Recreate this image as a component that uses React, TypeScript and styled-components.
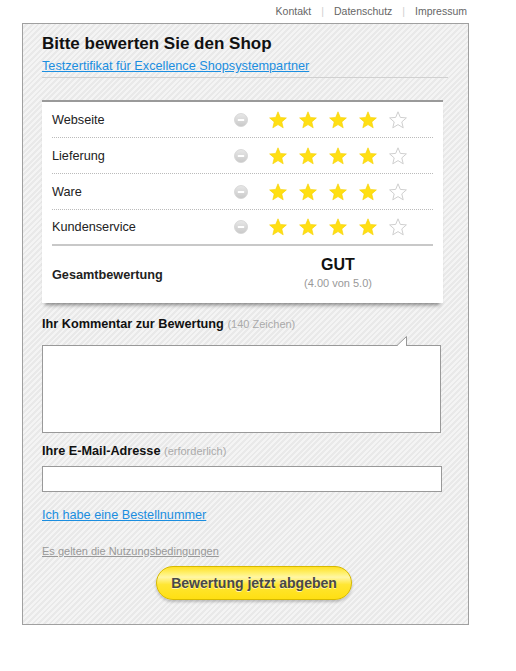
import React, { FC } from 'react'
import styled, { createGlobalStyle } from 'styled-components'

const GlobalStyle = createGlobalStyle`
  html, body {
    margin: 0;
    padding: 0;
    background: #fff;
  }
  body {
    font-family: 'Liberation Sans', Arial, sans-serif;
    color: #222;
  }
`

const Page = styled.div`
  width: 516px;
  height: 671px;
`

const TopNav = styled.nav`
  height: 23px;
  display: flex;
  align-items: center;
  justify-content: flex-end;
  padding-right: 49px;
  font-size: 10.5px;
  line-height: 13px;
`

const NavLink = styled.a`
  color: #666;
  text-decoration: none;
`

const NavSep = styled.span`
  color: #d0d0d0;
  margin: 0 10px;
`

const Panel = styled.div`
  margin-left: 22px;
  width: 447px;
  height: 602px;
  box-sizing: border-box;
  border: 1px solid #a0a0a0;
  padding: 10px 20px 0 19px;
  background-color: #efefef;
  background-image: repeating-linear-gradient(
    135deg,
    #f4f4f4 0px,
    #f4f4f4 2px,
    #e9e9e9 2px,
    #e9e9e9 4px
  );
`

const Header = styled.div`
  border-bottom: 1px solid #d0d0d0;
  padding-bottom: 3px;
`

const Title = styled.h1`
  margin: 0 0 4px;
  font-size: 17px;
  line-height: 20px;
  font-weight: 700;
  color: #111;
`

const BlueLink = styled.a`
  display: block;
  font-size: 12.7px;
  line-height: 16px;
  color: #1b8ee0;
  text-decoration: underline;
`

const Card = styled.div`
  margin-top: 22px;
  width: 401px;
  box-sizing: border-box;
  background: #fff;
  border-top: 2px solid #9a9a9a;
  padding: 0 10px;
  box-shadow: 0 5px 4px -3px rgba(0, 0, 0, 0.45);
`

const Row = styled.div<{ $last?: boolean }>`
  height: ${p => (p.$last ? 34 : 35)}px;
  display: flex;
  align-items: center;
  border-bottom: ${p => (p.$last ? '2px solid #c8c8c8' : '1px dotted #bbb')};
`

const Label = styled.div<{ $bold?: boolean }>`
  flex: 1;
  font-size: 12.7px;
  font-weight: ${p => (p.$bold ? 700 : 400)};
  color: #222;
`

const MinusIcon = styled.svg`
  width: 14px;
  height: 14px;
  margin-right: 15px;
  display: block;
`

const Stars = styled.div`
  display: flex;
  margin-right: 20px;
`

const StarCell = styled.span`
  width: 30px;
  height: 20px;
  display: flex;
  align-items: center;
  justify-content: center;
`

const TotalRow = styled.div`
  height: 57px;
  display: flex;
  align-items: center;
`

const TotalBox = styled.div`
  width: 150px;
  margin-right: 20px;
  text-align: center;
  padding-bottom: 5px;
`

const Grade = styled.div`
  font-size: 16px;
  line-height: 19px;
  font-weight: 700;
  color: #111;
`

const GradeSub = styled.div`
  margin-top: 2px;
  font-size: 11px;
  line-height: 14px;
  color: #999;
`

const FieldLabel = styled.div<{ $top: number }>`
  margin-top: ${p => p.$top}px;
  font-size: 12.7px;
  line-height: 16px;
  font-weight: 700;
  color: #111;
`

const Hint = styled.span`
  font-size: 11px;
  font-weight: 400;
  color: #aaa;
`

const CommentWrap = styled.div`
  position: relative;
  margin-top: 13px;
  width: 399px;
`

const CommentBox = styled.textarea`
  display: block;
  width: 399px;
  height: 88px;
  box-sizing: border-box;
  border: 1px solid #999;
  background: #fff;
  resize: none;
  outline: none;
  padding: 4px;
  font-family: inherit;
`

const Notch = styled.svg`
  position: absolute;
  top: -9px;
  right: 34px;
  width: 10px;
  height: 10px;
  display: block;
`

const EmailInput = styled.input`
  display: block;
  margin-top: 7px;
  width: 400px;
  height: 26px;
  box-sizing: border-box;
  border: 1px solid #999;
  background: #fff;
  outline: none;
`

const OrderLink = styled(BlueLink)`
  margin-top: 15px;
`

const Terms = styled.a`
  display: block;
  margin-top: 21px;
  font-size: 11px;
  line-height: 14px;
  color: #999;
  text-decoration: underline;
`

const SubmitButton = styled.button`
  display: block;
  margin: 8px 0 0 114px;
  width: 196px;
  height: 34px;
  border-radius: 17px;
  border: 1px solid #d6b900;
  background: linear-gradient(
    to bottom,
    #ffe125 0%,
    #fff27a 22%,
    #fff6a6 32%,
    #ffe633 55%,
    #ffdf12 100%
  );
  box-shadow: 0 2px 3px rgba(0, 0, 0, 0.22);
  font-family: 'Liberation Sans', Arial, sans-serif;
  font-size: 14px;
  font-weight: 700;
  color: #484848;
  text-shadow: 0 1px 0 rgba(255, 255, 255, 0.6);
  padding: 0;
  cursor: pointer;
`

const STAR_PATH =
  'M9 0.8 L11.3 6.4 L17.4 6.9 L12.8 10.9 L14.2 16.8 L9 13.6 L3.8 16.8 L5.2 10.9 L0.6 6.9 L6.7 6.4 Z'

const Star: FC<{ filled: boolean }> = ({ filled }) => (
  <svg width="18" height="18" viewBox="0 0 18 18">
    <path
      d={STAR_PATH}
      fill={filled ? '#ffdf12' : '#fff'}
      stroke={filled ? '#f5d000' : '#cfcfcf'}
      strokeWidth={filled ? 0.6 : 1}
      strokeLinejoin="miter"
    />
  </svg>
)

const Minus: FC = () => (
  <MinusIcon viewBox="0 0 14 14">
    <defs>
      <linearGradient id="mg" x1="0" y1="0" x2="0" y2="1">
        <stop offset="0" stopColor="#e8e8e8" />
        <stop offset="1" stopColor="#c9c9c9" />
      </linearGradient>
    </defs>
    <circle cx="7" cy="7" r="6.5" fill="url(#mg)" stroke="#d2d2d2" strokeWidth="0.8" />
    <rect x="3.8" y="6" width="6.4" height="2" rx="0.5" fill="#fff" />
  </MinusIcon>
)

const criteria = ['Webseite', 'Lieferung', 'Ware', 'Kundenservice']

export default function App() {
  return (
    <Page>
      <GlobalStyle />
      <TopNav>
        <NavLink>Kontakt</NavLink>
        <NavSep>|</NavSep>
        <NavLink>Datenschutz</NavLink>
        <NavSep>|</NavSep>
        <NavLink>Impressum</NavLink>
      </TopNav>
      <Panel>
        <Header>
          <Title>Bitte bewerten Sie den Shop</Title>
          <BlueLink>Testzertifikat für Excellence Shopsystempartner</BlueLink>
        </Header>
        <Card>
          {criteria.map((name, i) => (
            <Row key={name} $last={i === criteria.length - 1}>
              <Label>{name}</Label>
              <Minus />
              <Stars>
                {[0, 1, 2, 3, 4].map(s => (
                  <StarCell key={s}>
                    <Star filled={s < 4} />
                  </StarCell>
                ))}
              </Stars>
            </Row>
          ))}
          <TotalRow>
            <Label $bold>Gesamtbewertung</Label>
            <TotalBox>
              <Grade>GUT</Grade>
              <GradeSub>(4.00 von 5.0)</GradeSub>
            </TotalBox>
          </TotalRow>
        </Card>
        <FieldLabel $top={13}>
          Ihr Kommentar zur Bewertung <Hint>(140 Zeichen)</Hint>
        </FieldLabel>
        <CommentWrap>
          <CommentBox />
          <Notch viewBox="0 0 10 10">
            <path d="M0 10 L9.5 0.5 L9.5 10 Z" fill="#fff" />
            <path d="M0 9.5 L9.5 0.5 L9.5 10" fill="none" stroke="#999" strokeWidth="1" />
          </Notch>
        </CommentWrap>
        <FieldLabel $top={10}>
          Ihre E-Mail-Adresse <Hint>(erforderlich)</Hint>
        </FieldLabel>
        <EmailInput />
        <OrderLink>Ich habe eine Bestellnummer</OrderLink>
        <Terms>Es gelten die Nutzungsbedingungen</Terms>
        <SubmitButton>Bewertung jetzt abgeben</SubmitButton>
      </Panel>
    </Page>
  )
}
